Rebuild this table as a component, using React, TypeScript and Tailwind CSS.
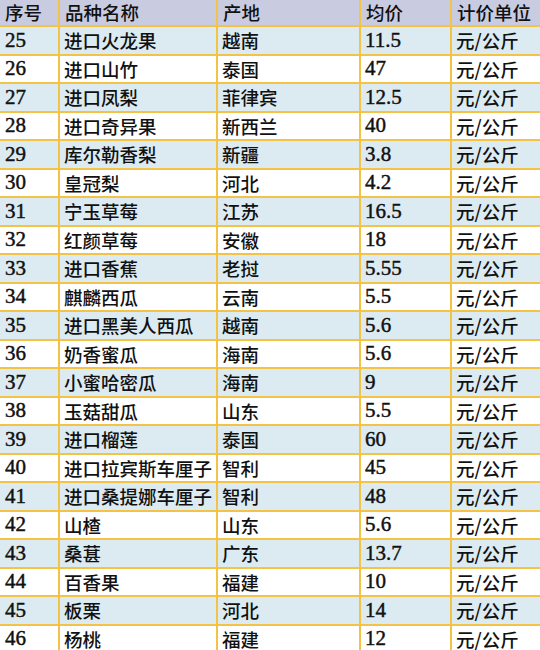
const rows: [string, string, string, string][] = [
  ["25", "进口火龙果", "越南", "11.5"],
  ["26", "进口山竹", "泰国", "47"],
  ["27", "进口凤梨", "菲律宾", "12.5"],
  ["28", "进口奇异果", "新西兰", "40"],
  ["29", "库尔勒香梨", "新疆", "3.8"],
  ["30", "皇冠梨", "河北", "4.2"],
  ["31", "宁玉草莓", "江苏", "16.5"],
  ["32", "红颜草莓", "安徽", "18"],
  ["33", "进口香蕉", "老挝", "5.55"],
  ["34", "麒麟西瓜", "云南", "5.5"],
  ["35", "进口黑美人西瓜", "越南", "5.6"],
  ["36", "奶香蜜瓜", "海南", "5.6"],
  ["37", "小蜜哈密瓜", "海南", "9"],
  ["38", "玉菇甜瓜", "山东", "5.5"],
  ["39", "进口榴莲", "泰国", "60"],
  ["40", "进口拉宾斯车厘子", "智利", "45"],
  ["41", "进口桑提娜车厘子", "智利", "48"],
  ["42", "山楂", "山东", "5.6"],
  ["43", "桑葚", "广东", "13.7"],
  ["44", "百香果", "福建", "10"],
  ["45", "板栗", "河北", "14"],
  ["46", "杨桃", "福建", "12"],
];

const cjk = "font-['Noto_Sans_CJK_SC',sans-serif] font-medium text-[18.5px]";
const num = "font-['Liberation_Serif','Noto_Sans_CJK_SC',serif] text-[21px] [-webkit-text-stroke:0.45px_#111111]";

export default function App() {
  return (
    <div className="w-[540px] h-[650px] overflow-hidden bg-white">
      <div className="grid grid-cols-[58px_156px_141px_89px_88px] grid-rows-[25px] auto-rows-[26.5px] gap-[2px] bg-[#f4c244] text-[#111111]">
        {["序号", "品种名称", "产地", "均价", "计价单位"].map((h) => (
          <div key={h} className={`bg-[#c9cce1] flex items-center pl-[5px] leading-none ${cjk}`}>
            {h}
          </div>
        ))}
        {rows.map(([id, name, origin, price], i) => {
          const bg = i % 2 === 0 ? "bg-[#dcebf2]" : "bg-white";
          return [
            <div key={id + "a"} className={`${bg} flex items-center pl-[5px] leading-none ${num}`}>{id}</div>,
            <div key={id + "b"} className={`${bg} flex items-center pl-[4px] leading-none whitespace-nowrap ${cjk}`}>{name}</div>,
            <div key={id + "c"} className={`${bg} flex items-center pl-[4px] leading-none ${cjk}`}>{origin}</div>,
            <div key={id + "d"} className={`${bg} flex items-center pl-[4px] leading-none ${num}`}>{price}</div>,
            <div key={id + "e"} className={`${bg} flex items-center pl-[4px] leading-none whitespace-nowrap ${cjk}`}>元/公斤</div>,
          ];
        })}
      </div>
    </div>
  );
}
